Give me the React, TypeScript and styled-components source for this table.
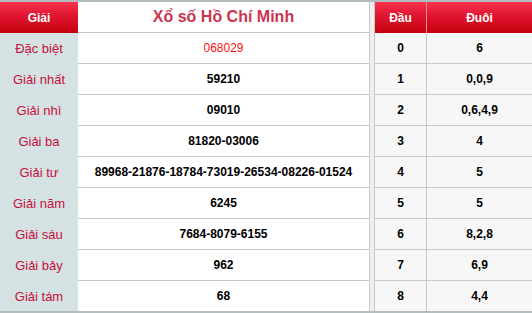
import styled, { createGlobalStyle } from "styled-components";

const GlobalStyle = createGlobalStyle`
  body {
    margin: 0;
    background: #ffffff;
    font-family: "Liberation Sans", Arial, sans-serif;
  }
`;

const Board = styled.div`
  display: flex;
  gap: 4px;
  width: 532px;
  background: #efefef;
  border-top: 2px solid #b4bcc0;
  border-bottom: 2px solid #b4bcc0;
`;

const PrizeTable = styled.div`
  display: grid;
  grid-template-columns: 78px 291px;
  width: 370px;
  background: #ffffff;
  border-right: 1px solid #c8c8c8;
`;

const LotoTable = styled.div`
  display: grid;
  grid-template-columns: 52px 105px;
  width: 158px;
  background: #f7f7f7;
  border-left: 1px solid #c8c8c8;
`;

const Cell = styled.div<{ $last?: boolean }>`
  display: flex;
  align-items: center;
  justify-content: center;
  height: ${(p) => (p.$last ? "30px" : "31px")};
  box-sizing: border-box;
  font-size: 12px;
`;

const HeadCell = styled(Cell)<{ $divider?: boolean }>`
  background: linear-gradient(to bottom, #f7334e 0%, #e01530 45%, #c4000c 100%);
  color: #ffffff;
  font-weight: bold;
  font-size: 12px;
  border-right: ${(p) => (p.$divider ? "1px solid #e88a94" : "none")};
`;

const TitleCell = styled(Cell)`
  border-bottom: 1px solid #c8c8c8;
  color: #cc3450;
  font-size: 16px;
  font-weight: bold;
`;

const LabelCell = styled(Cell)`
  background: #d5e2e3;
  color: #c80f3c;
  font-size: 13px;
`;

const ValueCell = styled(Cell)<{ $special?: boolean }>`
  border-bottom: ${(p) => (p.$last ? "none" : "1px solid #c8c8c8")};
  color: ${(p) => (p.$special ? "#ff1010" : "#000000")};
  font-weight: ${(p) => (p.$special ? "normal" : "bold")};
`;

const LotoCell = styled(Cell)<{ $divider?: boolean }>`
  border-bottom: ${(p) => (p.$last ? "none" : "1px solid #c8c8c8")};
  border-right: ${(p) => (p.$divider ? "1px solid #c8c8c8" : "none")};
  font-weight: bold;
  color: #000000;
`;

const prizes = [
  { label: "Đặc biệt", value: "068029", special: true },
  { label: "Giải nhất", value: "59210" },
  { label: "Giải nhì", value: "09010" },
  { label: "Giải ba", value: "81820-03006" },
  { label: "Giải tư", value: "89968-21876-18784-73019-26534-08226-01524" },
  { label: "Giải năm", value: "6245" },
  { label: "Giải sáu", value: "7684-8079-6155" },
  { label: "Giải bảy", value: "962" },
  { label: "Giải tám", value: "68" },
];

const loto = [
  ["0", "6"],
  ["1", "0,0,9"],
  ["2", "0,6,4,9"],
  ["3", "4"],
  ["4", "5"],
  ["5", "5"],
  ["6", "8,2,8"],
  ["7", "6,9"],
  ["8", "4,4"],
];

export default function App() {
  return (
    <>
      <GlobalStyle />
      <Board>
        <PrizeTable>
          <HeadCell>Giải</HeadCell>
          <TitleCell>Xổ số Hồ Chí Minh</TitleCell>
          {prizes.map((p, i) => {
            const last = i === prizes.length - 1;
            return [
              <LabelCell key={p.label} $last={last}>
                {p.label}
              </LabelCell>,
              <ValueCell key={p.label + "-v"} $last={last} $special={p.special}>
                {p.value}
              </ValueCell>,
            ];
          })}
        </PrizeTable>
        <LotoTable>
          <HeadCell $divider>Đầu</HeadCell>
          <HeadCell>Đuôi</HeadCell>
          {loto.map(([head, tail], i) => {
            const last = i === loto.length - 1;
            return [
              <LotoCell key={head} $divider $last={last}>
                {head}
              </LotoCell>,
              <LotoCell key={head + "-t"} $last={last}>
                {tail}
              </LotoCell>,
            ];
          })}
        </LotoTable>
      </Board>
    </>
  );
}
